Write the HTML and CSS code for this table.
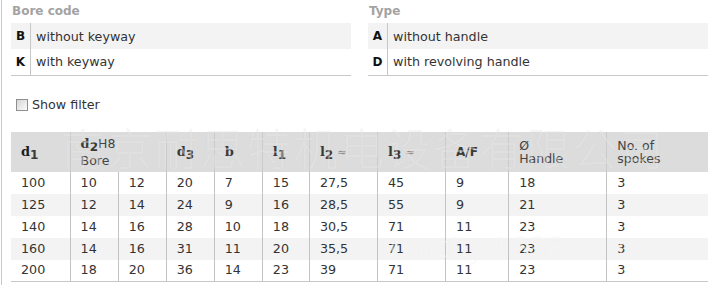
FILE: index.html
```html
<!DOCTYPE html>
<html lang="en">
<head>
<meta charset="utf-8">
<title>Bore code / Type</title>
<link rel="stylesheet" href="styles.css">
</head>
<body>
<div class="page">
  <div class="codes">
    <section class="code-block">
      <h3 class="code-title">Bore code</h3>
      <table class="code-table">
        <tr class="alt"><th class="code">B</th><td>without keyway</td></tr>
        <tr><th class="code">K</th><td>with keyway</td></tr>
      </table>
    </section>
    <section class="code-block">
      <h3 class="code-title">Type</h3>
      <table class="code-table">
        <tr class="alt"><th class="code">A</th><td>without handle</td></tr>
        <tr><th class="code">D</th><td>with revolving handle</td></tr>
      </table>
    </section>
  </div>

  <label class="filter"><span class="box"></span>Show filter</label>

  <div class="table-wrap">
    <table class="data">
      <colgroup>
        <col class="w59"><col class="w48"><col class="w48"><col class="w48"><col class="w48"><col class="w47">
        <col class="w68"><col class="w68"><col class="w63"><col class="w98"><col class="w100">
      </colgroup>
      <thead>
        <tr>
          <th><span class="sym dark">d</span><sub class="sb">1</sub></th>
          <th colspan="2" class="tall"><span class="sym">d</span><sub class="sb">2</sub><span class="norm">H8</span><br><span class="norm">Bore</span></th>
          <th><span class="sym">d</span><sub class="sb">3</sub></th>
          <th><span class="sym">b</span></th>
          <th><span class="sym">l</span><sub class="sb">1</sub></th>
          <th><span class="sym">l</span><sub class="sb">2</sub> <span class="approx">≈</span></th>
          <th><span class="sym">l</span><sub class="sb">3</sub> <span class="approx">≈</span></th>
          <th><span class="af">A/F</span></th>
          <th><span class="norm">Ø<br>Handle</span></th>
          <th><span class="norm">No. of<br>spokes</span></th>
        </tr>
      </thead>
      <tbody>
        <tr><td>100</td><td>10</td><td>12</td><td>20</td><td>7</td><td>15</td><td>27,5</td><td>45</td><td>9</td><td>18</td><td>3</td></tr>
        <tr class="alt"><td>125</td><td>12</td><td>14</td><td>24</td><td>9</td><td>16</td><td>28,5</td><td>55</td><td>9</td><td>21</td><td>3</td></tr>
        <tr><td>140</td><td>14</td><td>16</td><td>28</td><td>10</td><td>18</td><td>30,5</td><td>71</td><td>11</td><td>23</td><td>3</td></tr>
        <tr class="alt"><td>160</td><td>14</td><td>16</td><td>31</td><td>11</td><td>20</td><td>35,5</td><td>71</td><td>11</td><td>23</td><td>3</td></tr>
        <tr><td>200</td><td>18</td><td>20</td><td>36</td><td>14</td><td>23</td><td>39</td><td>71</td><td>11</td><td>23</td><td>3</td></tr>
      </tbody>
    </table>
    <div class="watermark wm-cn" aria-hidden="true">南京耐思特机电设备有限公司</div>
    <div class="watermark wm-url" aria-hidden="true">nmcity.1688.com</div>
  </div>
</div>
</body>
</html>
```
FILE: styles.css
```css
html, body {
  margin: 0;
  padding: 0;
  background: #fff;
}
body {
  font-family: "DejaVu Sans", Verdana, sans-serif;
  font-size: 12.7px;
  color: #333;
  overflow: hidden;
}
.page {
  margin-left: 1px;
  border-left: 1px solid #c8c8c8;
  padding-left: 9px;
  width: 697px;
  height: 285px;
}
.codes {
  display: grid;
  grid-template-columns: 340px 340px;
  column-gap: 17px;
}
.code-title {
  margin: 0;
  height: 23px;
  line-height: 22px;
  font-size: 12px;
  font-weight: bold;
  color: #a3a3a3;
  padding-left: 1px;
}
.code-table {
  width: 340px;
  border-collapse: collapse;
  border-bottom: 1px solid #c8c8c8;
}
.code-table tr {
  height: 26px;
}
.code-table tr.alt {
  background: #f3f3f3;
}
.code-table th.code {
  width: 19px;
  padding: 0;
  text-align: center;
  font-weight: bold;
  font-size: 12px;
  color: #111;
  border-right: 1px solid #c8c8c8;
}
.code-table td {
  padding: 0 0 0 5px;
  color: #333;
}
.filter {
  display: flex;
  align-items: center;
  height: 16px;
  margin-top: 21px;
  padding-left: 5px;
  gap: 4px;
  color: #333;
}
.box {
  width: 10px;
  height: 10px;
  border: 1px solid #8e8f8f;
  background: linear-gradient(135deg, #d6d6d6, #fbfbfb);
}
.table-wrap {
  position: relative;
  margin-top: 19px;
  width: 697px;
}
.data {
  width: 697px;
  border-collapse: collapse;
  table-layout: fixed;
  border-bottom: 1px solid #c8c8c8;
}
.w59 { width: 59px; }
.w48 { width: 48px; }
.w47 { width: 47px; }
.w68 { width: 68px; }
.w63 { width: 63px; }
.w98 { width: 98px; }
.w100 { width: 101px; }
.data thead th {
  background: #dcdcdc;
  height: 40px;
  padding: 0 8px 0 10px;
  vertical-align: middle;
  text-align: left;
  font-weight: normal;
  line-height: 13px;
  border-left: 1px solid #cbcbcb;
  color: #444;
}
.data thead th.tall {
  line-height: 17px;
}
.data thead th:first-child {
  border-left: none;
}
.sym {
  font-family: "DejaVu Serif", "Liberation Serif", serif;
  font-weight: bold;
  font-size: 13px;
  color: #3a3a3a;
}
.sym.dark {
  color: #1e1e1e;
}
.sb {
  font-family: "DejaVu Sans", Verdana, sans-serif;
  font-weight: bold;
  font-size: 12px;
  vertical-align: -3px;
  line-height: 0;
  color: #3a3a3a;
}
.approx {
  color: #8a8a8a;
  font-size: 11px;
}
.af {
  font-weight: bold;
  font-size: 12px;
  color: #3a3a3a;
}
.norm {
  font-weight: normal;
  color: #444;
  font-size: 12.5px;
}
.data tbody tr {
  height: 22px;
}
.data tbody tr.alt {
  background: #f3f3f3;
}
.data tbody td {
  padding: 0 0 0 10px;
  border-left: 1px solid #c3c3c3;
  color: #333;
  line-height: 14px;
}
.data tbody td:first-child {
  border-left: none;
}
.watermark {
  position: absolute;
  pointer-events: none;
  white-space: nowrap;
}
.wm-cn {
  left: 50px;
  top: -7px;
  line-height: 44px;
  font-family: "Noto Sans CJK SC", sans-serif;
  font-weight: 300;
  font-size: 44px;
  letter-spacing: 2.5px;
  color: rgba(255, 255, 255, 0.4);
  text-shadow: 0 0 1px rgba(0, 0, 0, 0.07);
}
.wm-url {
  left: 378px;
  top: 99px;
  line-height: 30px;
  font-family: "Noto Sans", sans-serif;
  font-weight: 300;
  font-size: 30px;
  letter-spacing: 1px;
  color: rgba(255, 255, 255, 0.5);
  text-shadow: 0 0 1px rgba(0, 0, 0, 0.035);
}
```
